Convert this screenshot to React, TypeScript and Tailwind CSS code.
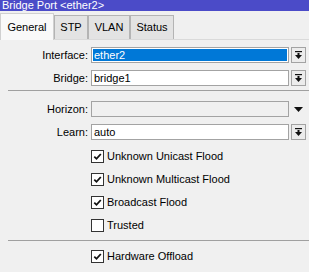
import React from "react";

const tabs = [
  { name: "General", w: "w-[54px]", active: true },
  { name: "STP", w: "w-[34px]", active: false },
  { name: "VLAN", w: "w-[42px]", active: false },
  { name: "Status", w: "w-[44px]", active: false },
];

function DropButton() {
  return (
    <div className="ml-[2px] flex h-[16px] w-[15px] items-center justify-center border border-[#a3a3a3] bg-[#ececec]">
      <svg width="7" height="8" viewBox="0 0 7 8">
        <rect x="0" y="0" width="7" height="1.2" fill="#111" />
        <rect x="2.5" y="2" width="2" height="2.5" fill="#111" />
        <polygon points="0,4 7,4 3.5,8" fill="#111" />
      </svg>
    </div>
  );
}

function FieldRow({
  label,
  value,
  selected,
  disabled,
  className,
}: {
  label: string;
  value: string;
  selected?: boolean;
  disabled?: boolean;
  className?: string;
}) {
  return (
    <div className={`flex h-[16px] items-center ${className ?? ""}`}>
      <div className="w-[88px] text-right leading-[16px]">{label}</div>
      <div
        className={`ml-[3px] flex h-[16px] flex-1 items-center border border-[#a3a3a3] ${
          disabled ? "bg-[#f0f0f0]" : "bg-white"
        } ${selected ? "p-px" : ""}`}
      >
        {selected ? (
          <div className="flex h-full flex-1 items-center bg-[#0078d7] pl-[1px] text-white leading-[14px]">
            {value}
          </div>
        ) : (
          <div className="pl-[2px] leading-[14px]">{value}</div>
        )}
      </div>
      {disabled ? (
        <div className="ml-[2px] flex h-[16px] w-[15px] items-center justify-center">
          <svg width="9" height="5" viewBox="0 0 9 5">
            <polygon points="0,0 9,0 4.5,5" fill="#111" />
          </svg>
        </div>
      ) : (
        <DropButton />
      )}
      <div className="w-[3px]" />
    </div>
  );
}

function Check({ label, checked, className }: { label: string; checked: boolean; className?: string }) {
  return (
    <div className={`flex h-[13px] items-center pl-[91px] ${className ?? ""}`}>
      <div className="flex h-[13px] w-[13px] items-center justify-center border border-[#333] bg-white">
        {checked && (
          <svg width="9" height="9" viewBox="0 0 9 9">
            <path d="M1.3 4.6 L3.5 6.8 L7.8 2" stroke="#111" strokeWidth="1.8" fill="none" />
          </svg>
        )}
      </div>
      <span className="ml-[3px] leading-[13px]">{label}</span>
    </div>
  );
}

export default function App() {
  return (
    <div className="h-[272px] w-[309px] overflow-hidden bg-[#f0f0f0] font-['Liberation_Sans',Arial,sans-serif] text-[11px] text-black">
      <div className="h-[11px] overflow-hidden bg-[#4b4bc8] pl-[2px] text-white">
        <div className="-mt-px leading-[12px]">Bridge Port &lt;ether2&gt;</div>
      </div>

      <div className="flex h-[29px] items-end border-b border-[#dadada]">
        {tabs.map((t) => (
          <div
            key={t.name}
            className={`flex ${t.w} items-center justify-center border-x border-t ${
              t.active
                ? "-mb-px h-[27px] border-[#d0d0d0] bg-[#f9f9f9]"
                : "h-[24px] border-[#b4b4b4] bg-[#e3e3e3]"
            }`}
          >
            {t.name}
          </div>
        ))}
      </div>

      <FieldRow label="Interface:" value="ether2" selected className="mt-[7px]" />
      <FieldRow label="Bridge:" value="bridge1" className="mt-[7px]" />
      <div className="ml-[8px] mt-[4px] h-px bg-[#a0a0a0]" />
      <FieldRow label="Horizon:" value="" disabled className="mt-[10px]" />
      <FieldRow label="Learn:" value="auto" className="mt-[7px]" />

      <Check label="Unknown Unicast Flood" checked className="mt-[10px]" />
      <Check label="Unknown Multicast Flood" checked className="mt-[10px]" />
      <Check label="Broadcast Flood" checked className="mt-[10px]" />
      <Check label="Trusted" checked={false} className="mt-[10px]" />
      <div className="ml-[8px] mt-[8px] h-px bg-[#a0a0a0]" />
      <Check label="Hardware Offload" checked className="mt-[9px]" />
    </div>
  );
}
